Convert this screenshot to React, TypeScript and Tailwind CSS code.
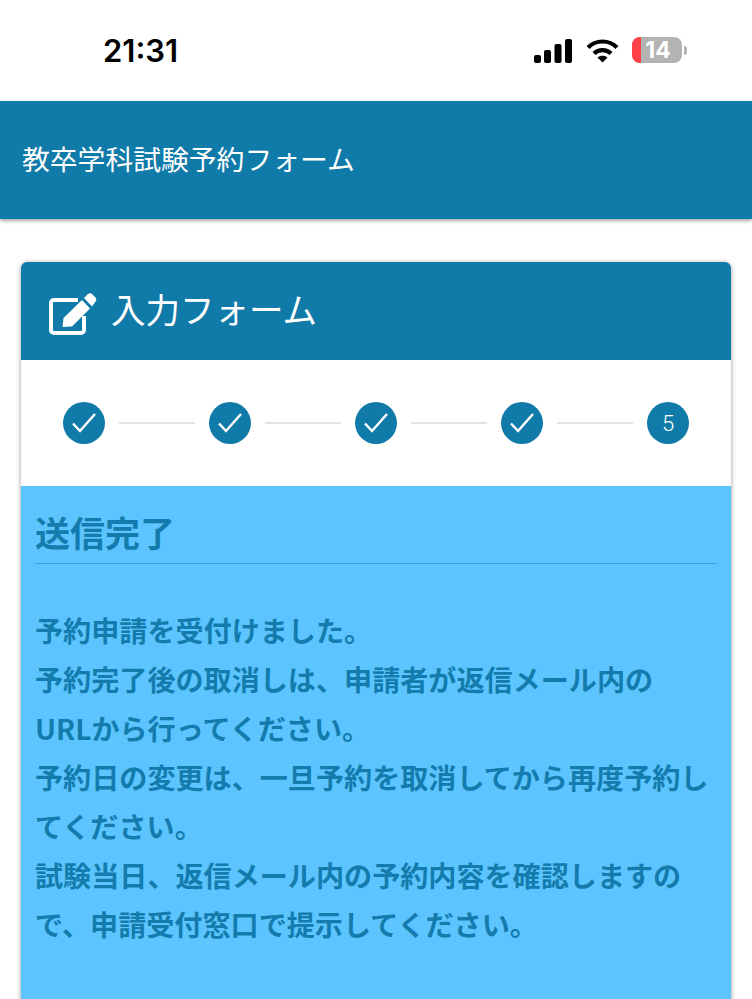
const jp = "font-['Noto_Sans_CJK_JP','Noto_Sans',sans-serif]";

function CheckStep() {
  return (
    <div className="w-[42px] h-[42px] rounded-full bg-[#107aa8] flex items-center justify-center shrink-0">
      <svg width="26" height="26" viewBox="0 0 26 26" fill="none" stroke="white" strokeWidth="2.5">
        <path d="M2 13.500 L9 21 L24 4" />
      </svg>
    </div>
  );
}

function Line() {
  return <div className="flex-1 h-[2px] mx-[14px] bg-[#e2e2e2]" />;
}

const lines = [
  "予約申請を受付けました。",
  "予約完了後の取消しは、申請者が返信メール内の",
  "URLから行ってください。",
  "予約日の変更は、一旦予約を取消してから再度予約し",
  "てください。",
  "試験当日、返信メール内の予約内容を確認しますの",
  "で、申請受付窓口で提示してください。",
];

export default function App() {
  return (
    <div className={`w-[752px] h-[999px] overflow-hidden bg-white ${jp}`}>
      <div className="h-[101px] flex items-start justify-between pl-[103px] pr-[65px]">
        <span className="mt-[32px] text-[31px] leading-[38px] font-semibold text-black font-['Inter',sans-serif]">21:31</span>
        <div className="mt-[37px] flex items-center">
          <svg width="38" height="25" viewBox="0 0 38 25" fill="black">
            <rect x="0" y="17" width="7" height="8" rx="2" />
            <rect x="10" y="12" width="7" height="13" rx="2" />
            <rect x="20.500" y="6" width="7" height="19" rx="2" />
            <rect x="31" y="1" width="7" height="24" rx="2" />
          </svg>
          <svg className="ml-[14px]" width="33" height="25" viewBox="0 0 33 25" fill="none" stroke="black" strokeWidth="4.2">
            <path d="M2 9.500 C10 1.500 23 1.500 31 9.500" />
            <path d="M8 15.500 C12.500 11 20.500 11 25 15.500" />
            <path d="M16.500 24.500 L11.500 19.500 C14 17.200 19 17.200 21.500 19.500 Z" fill="black" stroke="none" />
          </svg>
          <div className="ml-[13px] flex items-center">
            <div className="relative w-[50px] h-[26px] rounded-[8px] overflow-hidden bg-[#b3b3b3] flex items-center justify-center">
              <div className="absolute left-0 top-0 bottom-0 w-[9px] bg-[#ff4245]" />
              <span className="relative pl-[2px] text-[23px] leading-[26px] font-bold text-white font-['Inter',sans-serif]">14</span>
            </div>
            <div className="ml-[2px] w-[3px] h-[9px] rounded-r-full bg-[#b3b3b3]" />
          </div>
        </div>
      </div>

      <header className="h-[118px] bg-[#107aa8] flex items-center pl-[22px] pb-[2px] shadow-[0_2px_4px_rgba(0,0,0,0.35)]">
        <h1 className="text-[27.800px] leading-none font-normal text-white">教卒学科試験予約フォーム</h1>
      </header>

      <main className="mt-[43px] mx-[21px] rounded-t-[6px] overflow-hidden bg-white shadow-[0_1px_5px_rgba(0,0,0,0.4)]">
        <div className="h-[98px] bg-[#107aa8] flex items-center pl-[28px]">
          <svg className="mt-[6px] shrink-0" width="48" height="44" viewBox="0 0 48 44" fill="white">
            <path d="M29 8 H5 a3 3 0 0 0 -3 3 V38 a3 3 0 0 0 3 3 H32 a3 3 0 0 0 3 -3 V24" fill="none" stroke="white" strokeWidth="4" />
            <path d="M13.500 35 L14.500 26 L33 8 L41 16.500 L23 34.500 Z" />
            <path d="M35 6 L39 2 Q41 0.500 43 2 L46.500 5.500 Q48 7.500 46.500 9.500 L43 14.500 Z" />
          </svg>
          <span className="ml-[14px] mb-[5px] text-[34.500px] leading-none text-white">入力フォーム</span>
        </div>
        <div className="h-[126px] bg-white flex items-center px-[42px]">
          <CheckStep />
          <Line />
          <CheckStep />
          <Line />
          <CheckStep />
          <Line />
          <CheckStep />
          <Line />
          <div className="w-[42px] h-[42px] rounded-full bg-[#107aa8] flex items-center justify-center shrink-0 text-white text-[22px] font-light font-['Roboto',sans-serif]">
            5
          </div>
        </div>
        <div className="h-[520px] bg-[#5cc5ff] px-[14px] text-[#147cad]">
          <h2 className="h-[78px] pt-[25px] text-[35px] leading-[42px] font-bold border-b border-[#3fa3d6]">送信完了</h2>
          <div className="pt-[41px] text-[28.100px] leading-[49px] font-bold">
            {lines.map((l) => (
              <p key={l} className="whitespace-nowrap">{l}</p>
            ))}
          </div>
        </div>
      </main>
    </div>
  );
}
